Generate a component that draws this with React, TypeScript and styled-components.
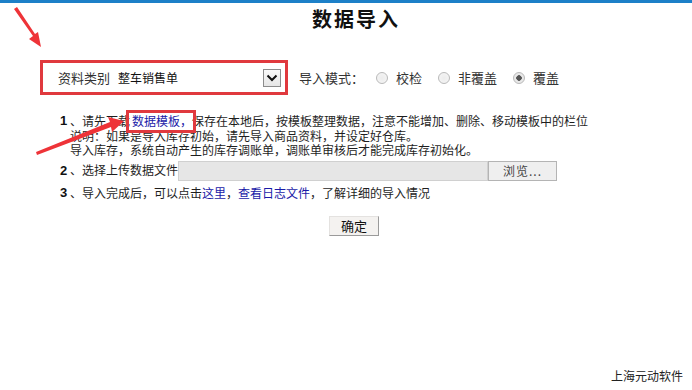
import styled, { createGlobalStyle } from "styled-components";

const GlobalStyle = createGlobalStyle`
  html, body {
    margin: 0;
    padding: 0;
    background: #ffffff;
  }
  body {
    font-family: "Noto Sans CJK SC", "Liberation Sans", sans-serif;
    color: #1e1e1e;
  }
`;

const modes = [
  { label: "校检", checked: false },
  { label: "非覆盖", checked: false },
  { label: "覆盖", checked: true },
];

function App() {
  return (
    <Page>
      <GlobalStyle />
      <TopBar />
      <Title>数据导入</Title>

      <Toolbar>
        <TypeBox>
          <TypeLabel>资料类别</TypeLabel>
          <SelectText>整车销售单</SelectText>
          <SelectButton>
            <svg width="12" height="8" viewBox="0 0 12 8">
              <path d="M1.5 1.5 L6 6 L10.5 1.5" fill="none" stroke="#111" strokeWidth="2" />
            </svg>
          </SelectButton>
        </TypeBox>
        <ModeLabel>导入模式：</ModeLabel>
        {modes.map((m) => (
          <ModeOption key={m.label}>
            <Radio $checked={m.checked} />
            {m.label}
          </ModeOption>
        ))}
      </Toolbar>

      <Steps>
        <StepNo>1</StepNo>
        <StepText $gap={6}>
          、请先下载<Marked>数据模板，</Marked>保存在本地后，按模板整理数据，注意不能增加、删除、移动模板中的栏位
          <br />
          说明：如果是导入库存初始，请先导入商品资料，并设定好仓库。
          <br />
          导入库存，系统自动产生的库存调账单，调账单审核后才能完成库存初始化。
        </StepText>

        <StepNo>2</StepNo>
        <StepText $gap={5}>
          <FileRow>
            、选择上传数据文件
            <FileField />
            <BrowseButton>浏览...</BrowseButton>
          </FileRow>
        </StepText>

        <StepNo>3</StepNo>
        <StepText $gap={0}>
          、导入完成后，可以点击<Link>这里</Link>，<Link>查看日志文件</Link>，了解详细的导入情况
        </StepText>
      </Steps>

      <Actions>
        <OkButton>确定</OkButton>
      </Actions>

      <Footer>上海元动软件</Footer>

      <Annotations width="692" height="390" viewBox="0 0 692 390">
        <path d="M14 9 L33 36 L29 39 L41 47 L38 32 L35 34 L17 7 Z" fill="#ee3338" />
        <path d="M37 155 L111 127 L112 132 L124 121 L108 117 L110 122 L36 152 Z" fill="#ee3338" />
      </Annotations>
    </Page>
  );
}

export default App;

const Page = styled.div`
  position: relative;
  width: 692px;
  min-height: 390px;
  display: flex;
  flex-direction: column;
  overflow: hidden;
`;

const TopBar = styled.div`
  height: 3px;
  background: #1d80c8;
`;

const Title = styled.h1`
  margin: 3px 0 0;
  padding-left: 20px;
  text-align: center;
  font-size: 20px;
  line-height: 26px;
  font-weight: 700;
  color: #111;
  letter-spacing: 2px;
`;

const Toolbar = styled.div`
  margin: 28px 0 0 40px;
  display: flex;
  align-items: center;
  font-size: 13px;
  color: #333;
`;

const TypeBox = styled.div`
  box-sizing: border-box;
  width: 248px;
  height: 35px;
  border: 3px solid #e0393e;
  display: flex;
  align-items: center;
  padding-left: 15px;
`;

const TypeLabel = styled.span`
  font-size: 13px;
  color: #333;
`;

const SelectText = styled.span`
  margin-left: 8px;
  font-size: 12px;
  color: #111;
  flex: 1;
`;

const SelectButton = styled.span`
  box-sizing: border-box;
  width: 18px;
  height: 18px;
  margin-right: 4px;
  border: 1px solid #8c8c8c;
  background: linear-gradient(#fafafa, #e6e6e6);
  display: flex;
  align-items: center;
  justify-content: center;
`;

const ModeLabel = styled.span`
  margin-left: 11px;
`;

const ModeOption = styled.label`
  display: flex;
  align-items: center;
  gap: 8px;
  margin-left: 12px;
  margin-right: 4px;
`;

const Radio = styled.span<{ $checked: boolean }>`
  box-sizing: border-box;
  width: 12px;
  height: 12px;
  border-radius: 50%;
  border: 1px solid #b9b9b9;
  background: radial-gradient(circle, ${(p) => (p.$checked ? "#555 0 2.5px, #e8e8e8 3px" : "#ececec 0, #f6f6f6 100%")});
`;

const Steps = styled.div`
  margin: 19px 0 0 60px;
  display: grid;
  grid-template-columns: 10px auto;
  align-items: start;
  font-size: 12px;
  line-height: 14.5px;
  color: #1e1e1e;
`;

const StepNo = styled.span`
  font-family: "Liberation Sans", sans-serif;
  font-weight: 700;
  font-size: 13px;
  color: #111;
`;

const StepText = styled.div<{ $gap: number }>`
  margin-bottom: ${(p) => p.$gap}px;
`;

const Marked = styled.span`
  position: relative;
  color: #1a1aa8;
  margin-left: 2px;
  &::after {
    content: "";
    position: absolute;
    left: -6px;
    right: -4px;
    top: -2px;
    bottom: -4px;
    border: 3px solid #e0393e;
  }
`;

const Link = styled.span`
  color: #1a1aa8;
`;

const FileRow = styled.div`
  display: flex;
  align-items: center;
  margin-top: -3px;
`;

const FileField = styled.span`
  box-sizing: border-box;
  width: 310px;
  height: 20px;
  background: #e6e6e6;
  border: 1px solid #d0d0d0;
`;

const BrowseButton = styled.span`
  box-sizing: border-box;
  width: 69px;
  height: 20px;
  border: 1px solid #b4b4b4;
  background: #efefef;
  color: #444;
  text-align: center;
  line-height: 18px;
  letter-spacing: 1px;
`;

const Actions = styled.div`
  display: flex;
  justify-content: center;
  margin-top: 16px;
  padding-left: 16px;
`;

const OkButton = styled.button`
  box-sizing: border-box;
  width: 50px;
  height: 20px;
  padding: 0;
  border: 1px solid #e4e2e0;
  border-right-color: #9a9a9a;
  border-bottom-color: #9a9a9a;
  background: #f4f2f0;
  font-family: "Noto Sans CJK SC", sans-serif;
  font-size: 13px;
  line-height: 18px;
  color: #111;
`;

const Footer = styled.div`
  margin-top: auto;
  padding: 0 9px 6px 0;
  text-align: right;
  font-size: 12px;
  color: #222;
`;

const Annotations = styled.svg`
  position: absolute;
  left: 0;
  top: 0;
  pointer-events: none;
`;
